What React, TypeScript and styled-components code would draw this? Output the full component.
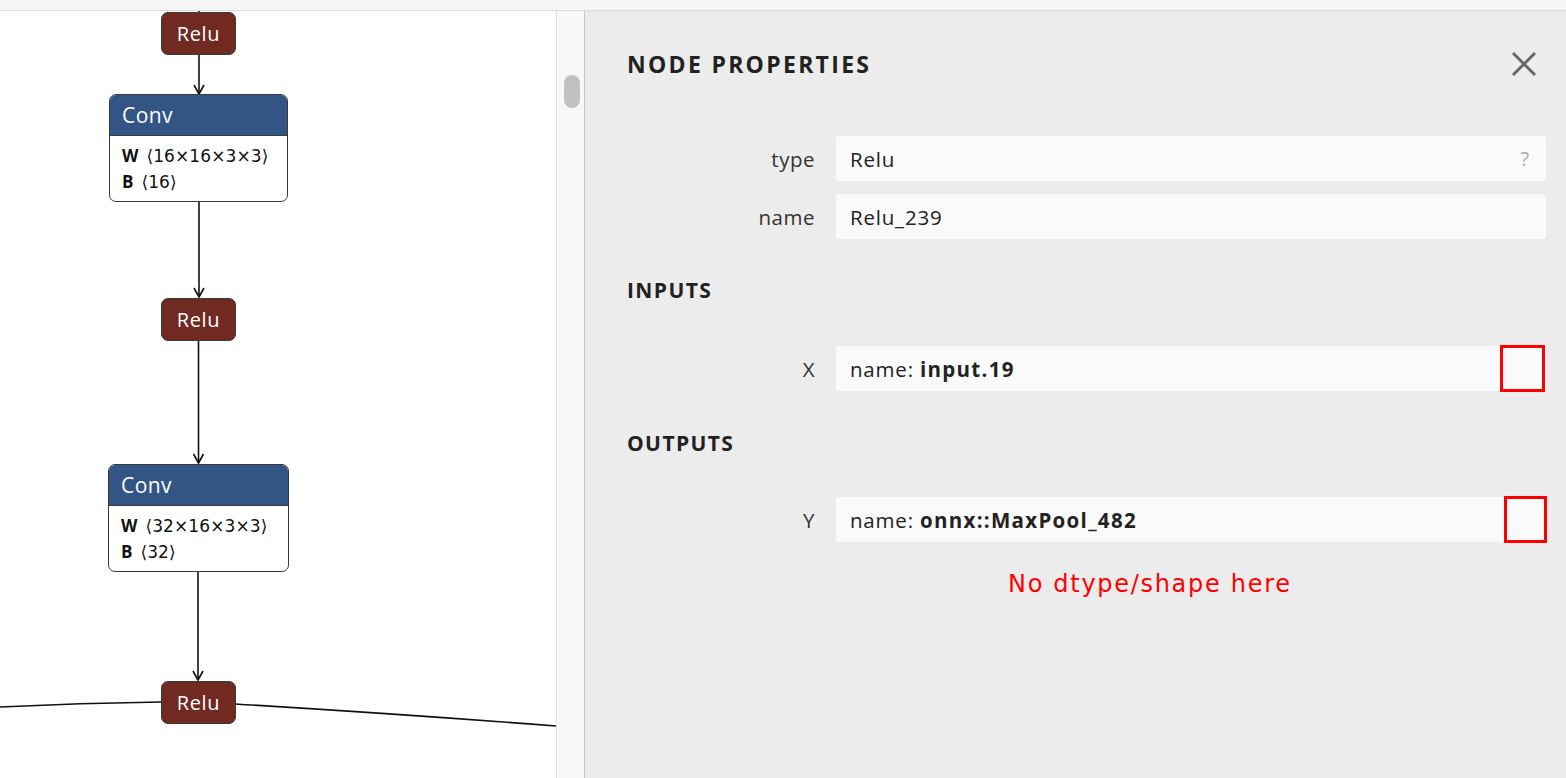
import React from "react";
import styled, { createGlobalStyle } from "styled-components";

const Global = createGlobalStyle`
  html, body { margin: 0; padding: 0; overflow: hidden; }
  body { font-family: "Open Sans", "Noto Sans", "DejaVu Sans", sans-serif; }
  * { box-sizing: border-box; }
`;

const Root = styled.div`
  width: 1566px;
  height: 778px;
  display: flex;
  flex-direction: column;
  background: #ffffff;
`;

const TopStrip = styled.div`
  height: 11px;
  flex: none;
  background: #f6f6f6;
  border-bottom: 1px solid #dcdcdc;
`;

const Main = styled.div`
  flex: 1;
  display: flex;
  min-height: 0;
`;

const GraphCanvas = styled.div`
  position: relative;
  width: 556px;
  flex: none;
  background: #ffffff;
  overflow: hidden;
`;

const EdgeLayer = styled.svg`
  position: absolute;
  left: 0;
  top: 0;
  width: 556px;
  height: 767px;
`;

const ScrollTrack = styled.div`
  width: 29px;
  flex: none;
  background: #f8f8f8;
  border-left: 1px solid #e2e2e2;
  border-right: 1px solid #c8c8c8;
  padding: 64px 0 0 7px;
`;

const ScrollThumb = styled.div`
  width: 16px;
  height: 33px;
  border-radius: 8px;
  background: #c1c1c1;
`;

const NodeBox = styled.div<{ $x: number; $y: number; $w: number }>`
  position: absolute;
  left: ${(p) => p.$x}px;
  top: ${(p) => p.$y}px;
  width: ${(p) => p.$w}px;
`;

const ReluNode = styled(NodeBox)`
  height: 43px;
  background: #702a21;
  border: 1.5px solid #3a3a3a;
  border-radius: 7px;
  color: #ffffff;
  font-size: 20px;
  letter-spacing: 0.6px;
  display: flex;
  align-items: center;
  justify-content: center;
  padding-bottom: 1px;
`;

const ConvNode = styled(NodeBox)`
  background: #ffffff;
  border: 1.5px solid #3a3a3a;
  border-radius: 7px;
  overflow: hidden;
`;

const ConvHeader = styled.div`
  height: 41px;
  background: #335586;
  border-bottom: 1.5px solid #3a3a3a;
  color: #ffffff;
  font-size: 21px;
  letter-spacing: 0.4px;
  display: flex;
  align-items: center;
  padding-left: 12px;
`;

const ConvBody = styled.div`
  padding: 7px 12px 6px;
  display: flex;
  flex-direction: column;
`;

const AttrRow = styled.div`
  font-size: 17px;
  line-height: 25px;
  color: #111;
  white-space: nowrap;
  b { font-weight: 700; margin-right: 8px; }
  span { font-family: "DejaVu Sans", sans-serif; font-size: 17px; letter-spacing: 0.1px; }
`;

const Panel = styled.div`
  flex: 1;
  background: #ececec;
  padding: 31px 20px 0 42px;
  display: flex;
  flex-direction: column;
`;

const PanelHeader = styled.div`
  display: flex;
  align-items: center;
  justify-content: space-between;
  height: 44px;
`;

const Title = styled.div`
  font-size: 23px;
  line-height: 30px;
  font-weight: 700;
  letter-spacing: 2.3px;
  color: #222;
`;

const CloseButton = styled.button`
  border: 0;
  background: transparent;
  padding: 0;
  width: 26px;
  height: 26px;
  margin-right: 9px;
  display: flex;
  align-items: center;
  justify-content: center;
`;

const PropGrid = styled.div<{ $top: number }>`
  display: grid;
  grid-template-columns: 188px 1fr;
  column-gap: 21px;
  row-gap: 13px;
  margin-top: ${(p) => p.$top}px;
`;

const Label = styled.div`
  text-align: right;
  font-size: 20.5px;
  letter-spacing: 0.5px;
  color: #333;
  align-self: center;
`;

const Value = styled.div`
  position: relative;
  height: 45px;
  border-radius: 4px;
  background: #fafafa;
  display: flex;
  align-items: center;
  justify-content: space-between;
  padding: 0 16px 0 14px;
  font-size: 20.5px;
  letter-spacing: 0.8px;
  color: #222;
  b { font-weight: 700; letter-spacing: 1.3px; }
`;

const Help = styled.span`
  color: #a8a8a8;
  font-size: 20px;
`;

const SectionTitle = styled.div<{ $top: number }>`
  margin-top: ${(p) => p.$top}px;
  font-size: 21px;
  line-height: 24px;
  font-weight: 700;
  letter-spacing: 1.4px;
  color: #222;
`;

const Marker = styled.div<{ $right: number; $w: number }>`
  position: absolute;
  top: -1px;
  right: ${(p) => p.$right}px;
  width: ${(p) => p.$w}px;
  height: 47px;
  border: 3px solid #ff0000;
`;

const Note = styled.div`
  margin-top: 26px;
  padding-left: 381px;
  font-family: "DejaVu Sans", sans-serif;
  font-size: 24px;
  line-height: 32px;
  letter-spacing: 1.7px;
  color: #ff0000;
`;

const Arrow = ({ x, y }: { x: number; y: number }) => (
  <polyline
    points={`${x - 5},${y - 9} ${x},${y} ${x + 5},${y - 9}`}
    fill="none"
    stroke="#111"
    strokeWidth={1.6}
  />
);

export default function App() {
  return (
    <Root>
      <Global />
      <TopStrip />
      <Main>
        <GraphCanvas>
          <EdgeLayer viewBox="0 0 556 767">
            <g stroke="#111" strokeWidth={1.6} fill="none">
              <line x1={199} y1={0} x2={199} y2={2} />
              <line x1={199} y1={44} x2={199} y2={83} />
              <line x1={199} y1={189} x2={199} y2={286} />
              <line x1={198.5} y1={330} x2={198.5} y2={452} />
              <line x1={198} y1={559} x2={198} y2={669} />
              <path d="M0 696 Q 80 692 161 691" />
              <path d="M235 693 Q 400 703 556 715" />
            </g>
            <Arrow x={199} y={83} />
            <Arrow x={199} y={286} />
            <Arrow x={198.5} y={452} />
            <Arrow x={198} y={669} />
          </EdgeLayer>
          <ReluNode $x={161} $y={1} $w={75}>Relu</ReluNode>
          <ConvNode $x={109} $y={83} $w={179}>
            <ConvHeader>Conv</ConvHeader>
            <ConvBody>
              <AttrRow><b>W</b><span>⟨16×16×3×3⟩</span></AttrRow>
              <AttrRow><b>B</b><span>⟨16⟩</span></AttrRow>
            </ConvBody>
          </ConvNode>
          <ReluNode $x={161} $y={287} $w={75}>Relu</ReluNode>
          <ConvNode $x={108} $y={453} $w={181}>
            <ConvHeader>Conv</ConvHeader>
            <ConvBody>
              <AttrRow><b>W</b><span>⟨32×16×3×3⟩</span></AttrRow>
              <AttrRow><b>B</b><span>⟨32⟩</span></AttrRow>
            </ConvBody>
          </ConvNode>
          <ReluNode $x={161} $y={670} $w={75}>Relu</ReluNode>
        </GraphCanvas>
        <ScrollTrack>
          <ScrollThumb />
        </ScrollTrack>
        <Panel>
          <PanelHeader>
            <Title>NODE PROPERTIES</Title>
            <CloseButton aria-label="close">
              <svg width="26" height="26" viewBox="0 0 26 26">
                <path d="M2 2 L24 24 M24 2 L2 24" stroke="#666" strokeWidth={3} strokeLinecap="butt" />
              </svg>
            </CloseButton>
          </PanelHeader>
          <PropGrid $top={50}>
            <Label>type</Label>
            <Value>
              <span>Relu</span>
              <Help>?</Help>
            </Value>
            <Label>name</Label>
            <Value><span>Relu_239</span></Value>
          </PropGrid>
          <SectionTitle $top={39}>INPUTS</SectionTitle>
          <PropGrid $top={44}>
            <Label>X</Label>
            <Value>
              <span>name: <b>input.19</b></span>
              <Marker $right={1} $w={45} />
            </Value>
          </PropGrid>
          <SectionTitle $top={40}>OUTPUTS</SectionTitle>
          <PropGrid $top={42}>
            <Label>Y</Label>
            <Value>
              <span>name: <b>onnx::MaxPool_482</b></span>
              <Marker $right={-1} $w={43} />
            </Value>
          </PropGrid>
          <Note>No dtype/shape here</Note>
        </Panel>
      </Main>
    </Root>
  );
}
